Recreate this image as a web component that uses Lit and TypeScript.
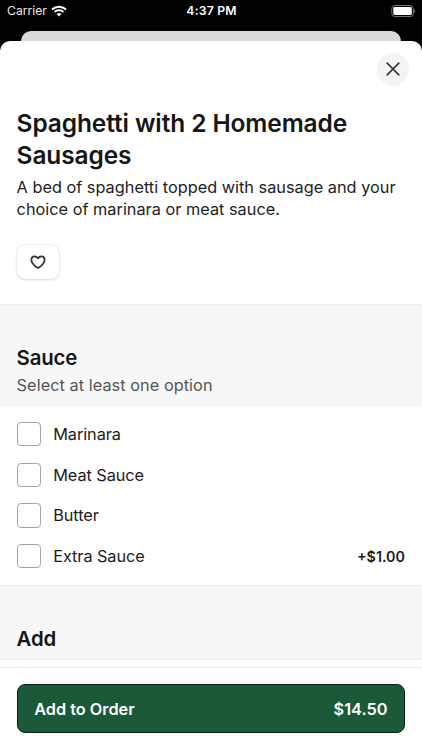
import { LitElement, html, css, nothing } from "lit";
import { customElement, property } from "lit/decorators.js";

interface Option {
  name: string;
  price?: string;
}

const SAUCES: Option[] = [
  { name: "Marinara" },
  { name: "Meat Sauce" },
  { name: "Butter" },
  { name: "Extra Sauce", price: "+$1.00" },
];

@customElement("status-bar")
class StatusBar extends LitElement {
  static styles = css`
    :host {
      display: grid;
      grid-template-columns: 1fr auto 1fr;
      align-items: center;
      height: 22px;
      padding: 0 6px 0 7px;
      color: #fff;
      font-size: 12.2px;
      line-height: 22px;
    }
    .carrier {
      display: flex;
      align-items: center;
      gap: 4px;
      color: #e8e8e8;
    }
    .time {
      font-weight: 600;
      letter-spacing: 0.2px;
    }
    .battery {
      justify-self: end;
    }
    svg {
      display: block;
    }
  `;
  render() {
    return html`
      <div class="carrier">
        <span>Carrier</span>
        <svg width="16" height="12" viewBox="0 0 16 12" fill="none" stroke="#fff">
          <path d="M1 4.4C5 .7 11 .7 15 4.4" stroke-width="2" />
          <path d="M3.5 7C6 4.7 10 4.7 12.5 7" stroke-width="2" />
          <path d="M8 11.4 5.6 9C7 7.8 9 7.8 10.4 9Z" fill="#fff" stroke="none" />
        </svg>
      </div>
      <div class="time">4:37 PM</div>
      <svg class="battery" width="25" height="12" viewBox="0 0 25 12">
        <rect x=".8" y=".5" width="21.5" height="11" rx="3" fill="none" stroke="#777" />
        <rect x="2.3" y="2" width="18.5" height="8" rx="1.4" fill="#fff" />
        <path d="M23.3 4.2v3.6c1.4-.5 1.4-3.1 0-3.6Z" fill="#777" />
      </svg>
    `;
  }
}

@customElement("option-row")
class OptionRow extends LitElement {
  @property() name = "";
  @property() price = "";
  static styles = css`
    :host {
      display: flex;
      align-items: center;
      height: 40.76px;
      color: #1b1b1b;
      font-size: 16.3px;
    }
    .box {
      box-sizing: border-box;
      width: 24.4px;
      height: 24.4px;
      margin-right: 12.2px;
      border: 1px solid #a5a5a5;
      border-radius: 4px;
      background: #fff;
    }
    .name {
      flex: 1;
      letter-spacing: -0.06px;
    }
    .price {
      font-size: 14.3px;
      font-weight: 600;
    }
  `;
  render() {
    return html`
      <span class="box"></span>
      <span class="name">${this.name}</span>
      ${this.price ? html`<span class="price">${this.price}</span>` : nothing}
    `;
  }
}

@customElement("app-root")
class AppRoot extends LitElement {
  static styles = css`
    :host {
      display: flex;
      flex-direction: column;
      height: 750px;
      overflow: hidden;
      background: #000;
      color: #161616;
      font-family: Inter, "Liberation Sans", sans-serif;
    }
    .behind {
      height: 10px;
      margin: 9px 21px 0;
      border-radius: 10px 10px 0 0;
      background: #dadada;
    }
    .sheet {
      flex: 1;
      min-height: 0;
      display: flex;
      flex-direction: column;
      border-radius: 10px 10px 0 0;
      background: #fff;
      overflow: hidden;
    }
    .content {
      flex: 1;
      min-height: 0;
      overflow: hidden;
    }
    .intro {
      box-sizing: border-box;
      height: 262.6px;
      padding: 12px 12.6px 0 16.6px;
    }
    .close {
      display: flex;
      align-items: center;
      justify-content: center;
      width: 32.6px;
      height: 32.6px;
      margin-left: auto;
      border-radius: 50%;
      background: #f4f4f4;
    }
    h1,
    h2,
    p {
      margin: 0;
    }
    h1 {
      margin-top: 21px;
      font-size: 24.46px;
      line-height: 32.6px;
      font-weight: 600;
      letter-spacing: -0.09px;
    }
    .desc {
      margin-top: 4px;
      font-size: 16.3px;
      line-height: 22.4px;
      letter-spacing: 0.01px;
      color: #222;
    }
    .like {
      display: flex;
      align-items: center;
      justify-content: center;
      width: 42px;
      height: 34px;
      margin-top: 24.6px;
      border-radius: 8px;
      background: #fff;
      box-shadow: 0 0 2px rgba(0, 0, 0, 0.14), 0 1px 3px rgba(0, 0, 0, 0.12);
    }
    .head {
      box-sizing: border-box;
      padding: 39.4px 16.6px 0;
      border: solid #eeeeee;
      border-width: 1px 0;
      background: #f7f7f7;
    }
    .sauce {
      height: 102px;
    }
    .add {
      height: 75px;
    }
    h2 {
      font-size: 20.4px;
      line-height: 28px;
      font-weight: 600;
      letter-spacing: -0.15px;
    }
    .hint {
      margin-top: 2.2px;
      font-size: 16.3px;
      line-height: 22px;
      letter-spacing: 0.05px;
      color: #555;
    }
    .options {
      box-sizing: border-box;
      height: 179px;
      padding: 8px 17px 0 16.6px;
    }
    .footer {
      box-sizing: border-box;
      height: 83px;
      padding: 16.4px 16.6px 0;
      border-top: 1px solid #ededed;
      background: #fff;
    }
    .order {
      box-sizing: border-box;
      display: flex;
      align-items: center;
      justify-content: space-between;
      height: 49px;
      padding: 0 17px 0 16.6px;
      border: 1px solid #0b1e13;
      border-radius: 8px;
      background: #1b5a38;
      color: #fff;
      font-size: 16.3px;
      font-weight: 600;
    }
  `;
  render() {
    return html`
      <status-bar></status-bar>
      <div class="behind"></div>
      <div class="sheet">
        <div class="content">
          <section class="intro">
            <div class="close">
              <svg width="14" height="14" viewBox="0 0 14 14" fill="none" stroke="#3a3a3a" stroke-width="1.7" stroke-linecap="round">
                <path d="M1.2 1.2 12.8 12.8M12.8 1.2 1.2 12.8" />
              </svg>
            </div>
            <h1>Spaghetti with 2 Homemade Sausages</h1>
            <p class="desc">A bed of spaghetti topped with sausage and your choice of marinara or meat sauce.</p>
            <div class="like">
              <svg width="16" height="14" viewBox="0 0 16 14" fill="none" stroke="#333" stroke-width="1.8" stroke-linejoin="round">
                <path d="M8 13C5.8 11.6 1.4 8.7 1.4 4.9 1.4 2.700 2.700 1.300 4.500 1.300 6.100 1.300 7.200 2.100 8 3.300 8.800 2.100 9.900 1.300 11.500 1.300 13.300 1.300 14.600 2.700 14.600 4.900 14.600 8.700 10.200 11.600 8 13Z" />
              </svg>
            </div>
          </section>
          <section class="head sauce">
            <h2>Sauce</h2>
            <p class="hint">Select at least one option</p>
          </section>
          <section class="options">
            ${SAUCES.map((o) => html`<option-row .name=${o.name} .price=${o.price ?? ""}></option-row>`)}
          </section>
          <section class="head add"><h2>Add</h2></section>
        </div>
        <div class="footer">
          <div class="order"><span>Add to Order</span><span>$14.50</span></div>
        </div>
      </div>
    `;
  }
}
